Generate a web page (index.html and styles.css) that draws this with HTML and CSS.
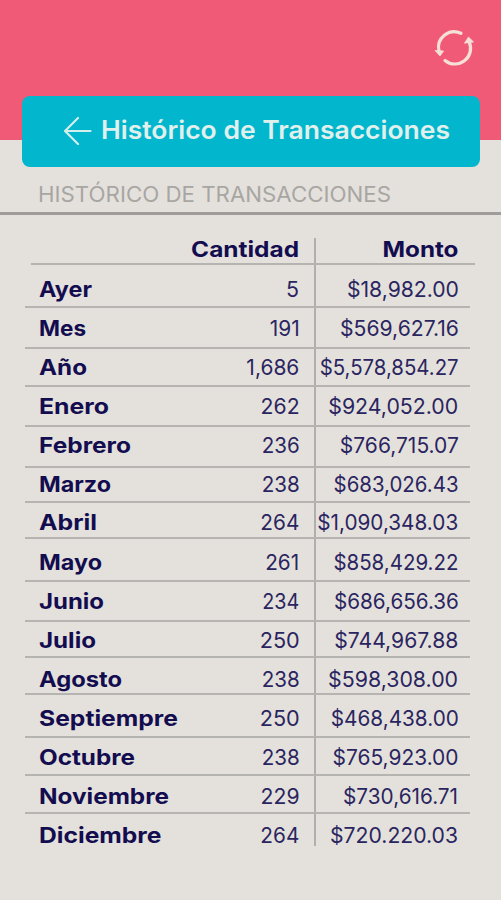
FILE: index.html
```
<!DOCTYPE html>
<html lang="es">
<head>
<meta charset="utf-8">
<title>Histórico de Transacciones</title>
<link rel="stylesheet" href="styles.css">
</head>
<body>
<header class="top">
  <svg class="refresh" viewBox="0 0 40 40" width="40" height="40" fill="none" stroke="#f5dfd7" stroke-width="3.2">
    <path stroke-linecap="round" d="M27 6.300A15.600 15.600 0 0 0 5 24"/>
    <path stroke-linecap="round" d="M11 33.400A15.600 15.600 0 0 0 35.200 15"/>
    <path fill="#f5dfd7" stroke="#f5dfd7" stroke-width=".8" stroke-linejoin="round" d="M1 23.500l8.600.500L6 29zM30.500 16.200l4-6.200 5 4.900z"/>
  </svg>
</header>
<div class="banner">
  <svg class="back" viewBox="0 0 30 30" width="30" height="30" fill="none" stroke="#d3efec" stroke-width="2.2" stroke-linecap="round" stroke-linejoin="round"><path d="M16 3L3 16 16 29M3 16H28.500"/></svg>
  <h1><span class="fit" data-w="349">Histórico de Transacciones</span></h1>
</div>
<h2><span class="fit" data-w="353">HISTÓRICO DE TRANSACCIONES</span></h2>
<main class="table">
  <div class="row head"><b></b><span class="qty"><b class="fit" data-w="108">Cantidad</b></span><span class="sum"><b class="fit" data-w="76">Monto</b></span></div>
  <div class="row r1"><b><i class="fit" data-w="53">Ayer</i></b><span class="qty"><i class="fit" data-w="13">5</i></span><span class="sum"><i class="fit" data-w="112">$18,982.00</i></span></div>
  <div class="row r2"><b><i class="fit" data-w="47">Mes</i></b><span class="qty"><i class="fit" data-w="30">191</i></span><span class="sum"><i class="fit" data-w="119">$569,627.16</i></span></div>
  <div class="row r3"><b><i class="fit" data-w="48">Año</i></b><span class="qty"><i class="fit" data-w="53">1,686</i></span><span class="sum"><i class="fit" data-w="139">$5,578,854.27</i></span></div>
  <div class="row r4"><b><i class="fit" data-w="70">Enero</i></b><span class="qty"><i class="fit" data-w="39">262</i></span><span class="sum"><i class="fit" data-w="130">$924,052.00</i></span></div>
  <div class="row r5"><b><i class="fit" data-w="92">Febrero</i></b><span class="qty"><i class="fit" data-w="38">236</i></span><span class="sum"><i class="fit" data-w="119">$766,715.07</i></span></div>
  <div class="row r6"><b><i class="fit" data-w="72">Marzo</i></b><span class="qty"><i class="fit" data-w="38">238</i></span><span class="sum"><i class="fit" data-w="125">$683,026.43</i></span></div>
  <div class="row r7"><b><i class="fit" data-w="58">Abril</i></b><span class="qty"><i class="fit" data-w="39">264</i></span><span class="sum"><i class="fit" data-w="141">$1,090,348.03</i></span></div>
  <div class="row r8"><b><i class="fit" data-w="63">Mayo</i></b><span class="qty"><i class="fit" data-w="34">261</i></span><span class="sum"><i class="fit" data-w="125">$858,429.22</i></span></div>
  <div class="row r9"><b><i class="fit" data-w="65">Junio</i></b><span class="qty"><i class="fit" data-w="37">234</i></span><span class="sum"><i class="fit" data-w="125">$686,656.36</i></span></div>
  <div class="row r10"><b><i class="fit" data-w="57">Julio</i></b><span class="qty"><i class="fit" data-w="40">250</i></span><span class="sum"><i class="fit" data-w="124">$744,967.88</i></span></div>
  <div class="row r11"><b><i class="fit" data-w="83">Agosto</i></b><span class="qty"><i class="fit" data-w="38">238</i></span><span class="sum"><i class="fit" data-w="130">$598,308.00</i></span></div>
  <div class="row r12"><b><i class="fit" data-w="139">Septiempre</i></b><span class="qty"><i class="fit" data-w="40">250</i></span><span class="sum"><i class="fit" data-w="128">$468,438.00</i></span></div>
  <div class="row r13"><b><i class="fit" data-w="96">Octubre</i></b><span class="qty"><i class="fit" data-w="38">238</i></span><span class="sum"><i class="fit" data-w="126">$765,923.00</i></span></div>
  <div class="row r14"><b><i class="fit" data-w="130">Noviembre</i></b><span class="qty"><i class="fit" data-w="39">229</i></span><span class="sum"><i class="fit" data-w="115">$730,616.71</i></span></div>
  <div class="row r15"><b><i class="fit" data-w="122.5">Diciembre</i></b><span class="qty"><i class="fit" data-w="39">264</i></span><span class="sum"><i class="fit" data-w="128">$720.220.03</i></span></div>
</main>
<script src="fit.js"></script>
</body>
</html>
```
FILE: styles.css
```
* { box-sizing: border-box; }
body {
  margin: 0;
  height: 900px;
  overflow: hidden;
  background: #e4e1dc;
  color: #130d50;
  font-family: Inter, "Liberation Sans", sans-serif;
}
.top {
  height: 140px;
  background: #f15a76;
  display: flex;
  justify-content: flex-end;
  padding: 27px 27px 0 0;
}
.banner {
  position: relative;
  height: 71px;
  margin: -44px 21px 0 22px;
  border-radius: 8px;
  background: #02b6cd;
  display: flex;
  align-items: flex-start;
  padding: 19px 0 0 40px;
}
.back { flex: none; }
h1, h2 { margin: 0; white-space: nowrap; }
h1 {
  margin-left: 9px;
  font-size: 25.5px;
  line-height: 30px;
  font-weight: 600;
  color: #e0f0ec;
}
h2 {
  height: 48px;
  padding: 12px 0 0 38px;
  border-bottom: 3px solid #9e9d9c;
  font-size: 21.5px;
  line-height: 30px;
  font-weight: 400;
  color: #a8a6a3;
}
.fit {
  display: inline-block;
  font-style: normal;
  transform-origin: left center;
  white-space: nowrap;
}
.table { padding: 23px 31px 0 25px; }
.row {
  display: grid;
  grid-template-columns: 289px 156px;
  grid-template-rows: 100%;
  border-bottom: 2px solid #b5b4b1;
  font-size: 21.5px;
  line-height: 26px;
}
.row > b { grid-area: 1 / 1; padding-left: 13.5px; font-weight: 700; }
.row > .qty, .row > .sum { display: flex; justify-content: flex-end; align-items: flex-start; font-weight: 400; color: #2a2560; }
.row > .qty { grid-area: 1 / 1; padding-right: 14.5px; }
.row > .sum { padding-right: 11.5px; border-left: 2px solid #b0afad; }
.row > * { padding-top: calc(var(--drop) - .4px); }
.qty .fit, .sum .fit { transform-origin: right center; }
.qty b, .sum b { font-weight: 700; color: #130d50; }
.head { height: 27px; margin: 0 -5px 0 6px; grid-template-columns: 283px 161px; }
.head > * { padding-top: 0; }
.head .fit { margin-top: -2px; }
.head > .sum { padding-right: 16.5px; }
.r1 { height: 43px; --drop: 11.3px; }
.r2 { height: 41px; --drop: 7.3px; }
.r3 { height: 38px; --drop: 5.4px; }
.r4 { height: 40px; --drop: 6.4px; }
.r5 { height: 41px; --drop: 5.3px; }
.r6 { height: 35px; --drop: 3.3px; }
.r7 { height: 36px; --drop: 6.8px; }
.r8 { height: 43px; --drop: 10.2px; }
.r9 { height: 40px; --drop: 6.2px; }
.r10 { height: 36px; --drop: 5.1px; }
.r11 { height: 37px; --drop: 8.1px; }
.r12 { height: 43px; --drop: 10.1px; }
.r13 { height: 38px; --drop: 6px; }
.r14 { height: 38px; --drop: 7px; }
.r15 { height: 32px; --drop: 8px; border-bottom: 0; }
```
FILE: fit.js
```
document.querySelectorAll('.fit').forEach(function (el) {
  var natural = el.getBoundingClientRect().width;
  el.style.transform = 'scaleX(' + Number(el.dataset.w) / natural + ')';
});
```
